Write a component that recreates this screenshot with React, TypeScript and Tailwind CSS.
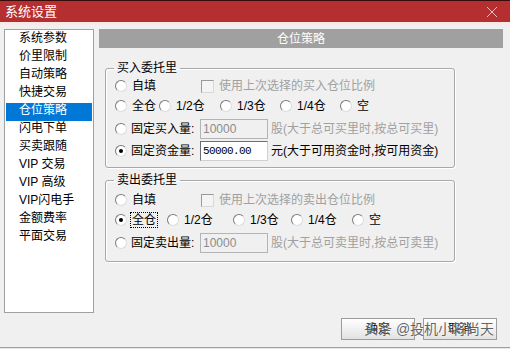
import React from "react";

const Radio = ({ checked }: { checked?: boolean }) => (
  <span className="relative inline-block w-[12px] h-[12px] shrink-0 rounded-full bg-white border border-t-[#7a7a7a] border-l-[#7a7a7a] border-r-[#dcdcdc] border-b-[#dcdcdc]">
    {checked && <span className="absolute left-[3px] top-[3px] w-[4px] h-[4px] rounded-full bg-black" />}
  </span>
);

const Check = () => (
  <span className="inline-block w-[13px] h-[13px] shrink-0 bg-[#f4f4f4] border border-t-[#9a9a9a] border-l-[#9a9a9a] border-r-[#d8d8d8] border-b-[#d8d8d8]" />
);

const Opt = ({ w, label, checked, focus }: { w: string; label: string; checked?: boolean; focus?: boolean }) => (
  <div className={`flex items-center ${w}`}>
    <Radio checked={checked} />
    <span className={`ml-[3px] leading-[14px] ${focus ? "border border-dotted border-black px-[1px]" : "px-[2px]"}`}>{label}</span>
  </div>
);

const Input = ({ value, disabled }: { value: string; disabled?: boolean }) => (
  <div
    className={`w-[68px] h-[20px] flex items-center pl-[2px] border ${
      disabled
        ? "bg-[#f0f0f0] border-[#b4b4b4] text-[#8c8c8c] font-['Liberation_Sans',sans-serif] text-[12px]"
        : "bg-white border-t-[#6e6e6e] border-l-[#6e6e6e] border-r-[#d0d0d0] border-b-[#d0d0d0] text-black font-['Liberation_Mono',monospace] text-[11px] tracking-[-0.6px]"
    }`}
  >
    {value}
  </div>
);

const items = ["系统参数", "价里限制", "自动策略", "快捷交易", "仓位策略", "闪电下单", "买卖跟随", "VIP 交易", "VIP 高级", "VIP闪电手", "金额费率", "平面交易"];

export default function App() {
  return (
    <div className="relative w-[510px] h-[349px] bg-[#f0f0f0] flex flex-col overflow-hidden text-[12px] leading-[16px] text-black font-['Liberation_Sans','Noto_Sans_CJK_SC',sans-serif]">
      {/* title bar */}
      <div className="h-[22px] bg-[#b52e30] border-t border-[#3a0b0b] flex items-center justify-between pl-[5px] pr-[12px] shrink-0">
        <span className="text-white text-[13px] leading-[16px]">系统设置</span>
        <svg width="12" height="12" viewBox="0 0 12 12">
          <path d="M1 1 L11 11 M11 1 L1 11" stroke="#f0bcbc" strokeWidth="1" />
        </svg>
      </div>
      <div className="h-[3px] bg-[#f8e9e9] shrink-0" />
      {/* body */}
      <div className="flex-1 flex pt-[4px] pl-[4px] border-b border-[#a0a0a0]">
        {/* left list */}
        <div className="w-[90px] h-[284px] bg-white border border-[#a0a0a0] pt-[1px] px-[1px] shrink-0">
          {items.map((t) => (
            <div
              key={t}
              className={`h-[18px] pl-[13px] leading-[15px] ${t === "仓位策略" ? "bg-[#0078d7] text-white" : ""}`}
            >
              {t}
            </div>
          ))}
        </div>
        {/* right panel */}
        <div className="ml-[5px] w-[404px] flex flex-col">
          <div className="h-[19px] bg-[#a0a0a0] text-white flex items-center justify-center shrink-0">仓位策略</div>

          <fieldset className="mt-[12px] ml-[6px] w-[350px] border border-[#a8a8a8] rounded-[3px] shadow-[inset_1px_1px_0_#ffffff,1px_1px_0_#ffffff]">
            <legend className="ml-[8px] px-[3px] leading-[16px]">买入委托里</legend>
            <div className="pl-[9px] pb-[6px]">
              <div className="h-[20px] flex items-center">
                <Opt w="w-[86px]" label="自填" />
                <Check />
                <span className="ml-[5px] text-[#a0a0a0]">使用上次选择的买入仓位比例</span>
              </div>
              <div className="h-[20px] flex items-center">
                <Opt w="w-[44px]" label="全仓" />
                <Opt w="w-[61px]" label="1/2仓" />
                <Opt w="w-[60px]" label="1/3仓" />
                <Opt w="w-[60px]" label="1/4仓" />
                <Opt w="w-[40px]" label="空" />
              </div>
              <div className="h-[22px] mt-[2px] flex items-center">
                <Radio />
                <span className="ml-[4px] w-[69px]">固定买入量:</span>
                <Input value="10000" disabled />
                <span className="ml-[3px] text-[#a0a0a0]">股(大于总可买里时,按总可买里)</span>
              </div>
              <div className="h-[21px] flex items-center">
                <Radio checked />
                <span className="ml-[4px] w-[69px]">固定资金量:</span>
                <Input value="50000.00" />
                <span className="ml-[3px]">元(大于可用资金时,按可用资金)</span>
              </div>
            </div>
          </fieldset>

          <fieldset className="mt-[4px] ml-[6px] w-[350px] border border-[#a8a8a8] rounded-[3px] shadow-[inset_1px_1px_0_#ffffff,1px_1px_0_#ffffff]">
            <legend className="ml-[8px] px-[3px] leading-[16px]">卖出委托里</legend>
            <div className="pl-[9px] pt-[2px] pb-[7px]">
              <div className="h-[20px] flex items-center">
                <Opt w="w-[86px]" label="自填" />
                <Check />
                <span className="ml-[5px] text-[#a0a0a0]">使用上次选择的卖出仓位比例</span>
              </div>
              <div className="h-[20px] flex items-center">
                <Opt w="w-[52px]" label="全仓" checked focus />
                <Opt w="w-[66px]" label="1/2仓" />
                <Opt w="w-[58px]" label="1/3仓" />
                <Opt w="w-[61px]" label="1/4仓" />
                <Opt w="w-[40px]" label="空" />
              </div>
              <div className="h-[22px] mt-[2px] flex items-center">
                <Radio />
                <span className="ml-[4px] w-[69px]">固定卖出量:</span>
                <Input value="10000" disabled />
                <span className="ml-[3px] text-[#a0a0a0]">股(大于总可卖里时,按总可卖里)</span>
              </div>
            </div>
          </fieldset>

          <div className="mt-auto mb-[7px] flex justify-end gap-[8px] pr-[6px]">
            <button className="w-[74px] h-[22px] border border-[#9c9c9c] bg-gradient-to-b from-[#ffffff] to-[#e2e2e2] text-[12px]">确定</button>
            <button className="w-[74px] h-[22px] border border-[#9c9c9c] bg-gradient-to-b from-[#ffffff] to-[#e2e2e2] text-[12px]">取消</button>
          </div>
        </div>
      </div>
      <div className="h-[1px] bg-[#e6e6e6] shrink-0" />
      {/* watermark */}
      <div className="absolute left-[364px] top-[320px] text-[14px] leading-[18px] text-[#3a3a3a]/80 [text-shadow:0_0_2px_#ffffff]">
        头条 @投机小将尚天
      </div>
    </div>
  );
}
